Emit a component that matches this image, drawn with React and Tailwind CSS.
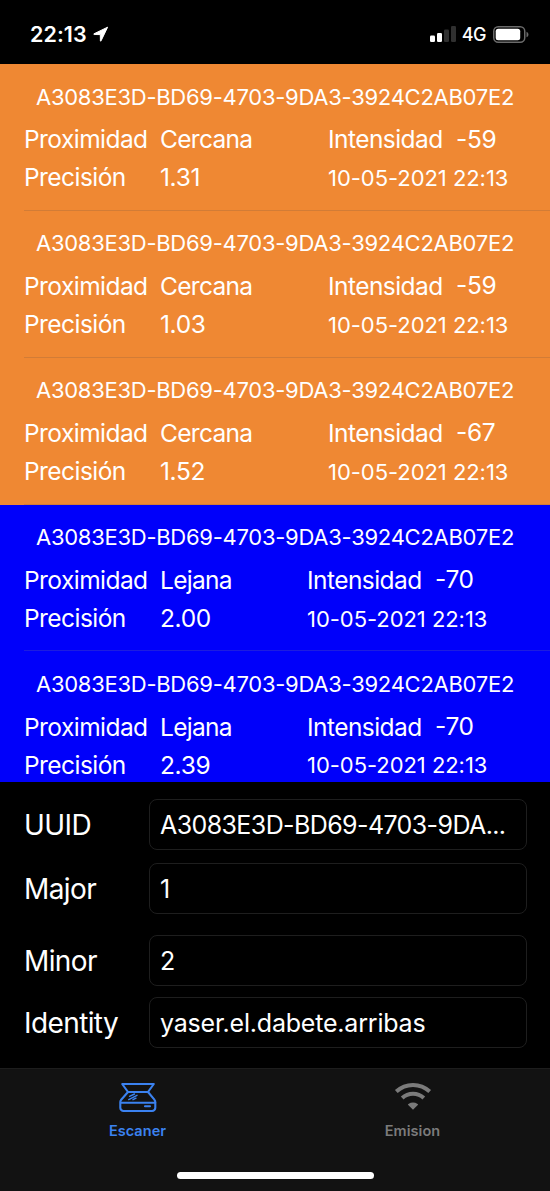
const beacons = [
  { proximity: "Cercana", accuracy: "1.31", rssi: "-59", near: true },
  { proximity: "Cercana", accuracy: "1.03", rssi: "-59", near: true },
  { proximity: "Cercana", accuracy: "1.52", rssi: "-67", near: true },
  { proximity: "Lejana", accuracy: "2.00", rssi: "-70", near: false },
  { proximity: "Lejana", accuracy: "2.39", rssi: "-70", near: false },
];

const fields = [
  { label: "UUID", value: "A3083E3D-BD69-4703-9DA...", spacing: "mb-[13px]", tracking: "tracking-[-0.6px]" },
  { label: "Major", value: "1", spacing: "mb-[21px]", tracking: "tracking-[-0.5px]" },
  { label: "Minor", value: "2", spacing: "mb-[11px]", tracking: "tracking-[-0.5px]" },
  { label: "Identity", value: "yaser.el.dabete.arribas", spacing: "", tracking: "tracking-[-0.2px]" },
];

function StatusBar() {
  return (
    <header className="flex h-16 shrink-0 items-center bg-black pt-1 pr-[21px] pl-[30px]">
      <span className="text-[21.500px] font-semibold tracking-[0.05px]">22:13</span>
      <svg className="ml-[5px] h-[17px] w-[17px]" viewBox="0 0 17 17" fill="white" stroke="white" strokeWidth="1" strokeLinejoin="round">
        <path d="M15.600 1.200 9 14.900c-.2.400-.6.300-.6-.1L8.300 8.600 2.200 8.500c-.5 0-.6-.5-.2-.7Z" />
      </svg>
      <svg className="ml-auto h-4 w-[26px]" viewBox="0 0 26 16">
        <rect x="0" y="9.500" width="5" height="6.500" rx="1.300" fill="white" />
        <rect x="7" y="7" width="5" height="9" rx="1.300" fill="white" />
        <rect x="14" y="3.500" width="5" height="12.500" rx="1.300" fill="#303030" />
        <rect x="21" y="0" width="5" height="16" rx="1.300" fill="#303030" />
      </svg>
      <span className="ml-[6px] text-[18px] font-medium tracking-[-0.5px]">4G</span>
      <svg className="ml-[7px] h-[17px] w-9" viewBox="0 0 36 17">
        <rect x=".75" y=".75" width="31" height="15.500" rx="4.500" fill="none" stroke="#6b6b6b" strokeWidth="1.500" />
        <rect x="2.700" y="2.800" width="24.500" height="11.400" rx="2.500" fill="white" />
        <path d="M33.500 5.700c2.600.9 2.600 4.700 0 5.600Z" fill="#6b6b6b" />
      </svg>
    </header>
  );
}

function BeaconRow({ beacon, last }) {
  return (
    <li className={`flex h-[146.85px] shrink-0 flex-col pt-[10px] ${beacon.near ? "bg-[#ef8833]" : "bg-[#0000fa]"}`}>
      <div className="flex h-[46px] items-center pl-[36px] text-[22px] whitespace-nowrap tracking-[-0.27px]">
        A3083E3D-BD69-4703-9DA3-3924C2AB07E2
      </div>
      <div className="flex pl-6 text-[24.500px] whitespace-nowrap tracking-[-0.55px]">
        <div className="w-[136px]">
          <div className="flex h-[38px] items-center pt-px">Proximidad</div>
          <div className="flex h-[38px] items-center pt-px">Precisión</div>
        </div>
        <div className={beacon.near ? "w-[168px]" : "w-[147px]"}>
          <div className="flex h-[38px] items-center pt-px tracking-[-0.7px]">{beacon.proximity}</div>
          <div className="flex h-[38px] items-center pt-px tracking-[-0.35px]">{beacon.accuracy}</div>
        </div>
        <div>
          <div className="flex h-[38px] items-center">
            <span className="w-[128px] pt-px">Intensidad</span>
            <span className="tracking-[-0.3px]">{beacon.rssi}</span>
          </div>
          <div className="flex h-[38px] items-center pt-[3px] text-[22px] tracking-[-0.05px]">10-05-2021 22:13</div>
        </div>
      </div>
      {!last && (
        <div className={`mt-auto ml-6 h-px ${beacon.near ? "bg-[#d27c36]" : "bg-[#1c1ce0]"}`} />
      )}
    </li>
  );
}

function Field({ field }) {
  return (
    <label className={`flex h-[51px] items-center ${field.spacing}`}>
      <span className="w-[125px] text-[28px] tracking-[-0.6px]">{field.label}</span>
      <span className={`flex h-full flex-1 items-center rounded-[8px] border border-[#1e1e1e] pt-[2px] pl-[10px] text-[25px] whitespace-nowrap ${field.tracking}`}>
        {field.value}
      </span>
    </label>
  );
}

function ScannerIcon() {
  return (
    <svg className="h-8 w-10" viewBox="0 0 40 32" fill="none" stroke="#3b82f0" strokeWidth="2.100" strokeLinejoin="round" strokeLinecap="round">
      <path d="M4.200 3h31.600L30 11H10Z" />
      <path d="M10 11 3.200 18.700Q2.300 19.700 2.300 21v5.800a3.200 3.200 0 0 0 3.200 3.200h28.600a3.200 3.200 0 0 0 3.200-3.200V21q0-1.300-.9-2.300L30 11M2.500 21.800h35" />
      <path d="M27 25.200h5" />
      <path d="m11.500 15.300 5-2.300M10.700 18.600l8.300-4.300M15 18.700l3-1.500" strokeWidth="1.400" />
    </svg>
  );
}

function WifiIcon() {
  return (
    <svg className="h-8 w-10" viewBox="0 0 40 32" fill="none" stroke="#7b7b7b" strokeWidth="4">
      <path d="M3.300 10.500a24.500 24.500 0 0 1 33.400 0" />
      <path d="M9.200 17a15.800 15.800 0 0 1 21.600 0" />
      <path d="m20 28.800-4.800-4.700q-.6-.7.200-1.200a8.500 8.500 0 0 1 9.200 0q.8.500.2 1.200Z" fill="#7b7b7b" stroke="none" />
    </svg>
  );
}

function TabBar() {
  return (
    <nav className="flex h-[123px] shrink-0 flex-col border-t border-[#1d1d1d] bg-[#121212]">
      <div className="flex text-[14.5px] font-semibold">
        <div className="flex flex-1 flex-col items-center pt-[12px] text-[#3b82f0]">
          <ScannerIcon />
          <span className="mt-[6px] leading-[23px] tracking-[0.05px]">Escaner</span>
        </div>
        <div className="flex flex-1 flex-col items-center pt-[12px] text-[#7b7b7b]">
          <WifiIcon />
          <span className="mt-[6px] leading-[23px] tracking-[0.05px]">Emision</span>
        </div>
      </div>
      <div className="mx-auto mt-auto mb-[12px] h-[7px] w-[197px] rounded-full bg-white" />
    </nav>
  );
}

export default function App() {
  return (
    <div className="flex h-[1191px] w-[550px] flex-col overflow-hidden bg-black font-['Inter',sans-serif] text-white">
      <StatusBar />
      <ul className="flex h-[718px] shrink-0 flex-col overflow-hidden">
        {beacons.map((beacon, i) => (
          <BeaconRow key={i} beacon={beacon} last={i === beacons.length - 1} />
        ))}
      </ul>
      <main className="flex-1 pt-[17px] pr-[23px] pl-6">
        {fields.map((field) => (
          <Field key={field.label} field={field} />
        ))}
      </main>
      <TabBar />
    </div>
  );
}
